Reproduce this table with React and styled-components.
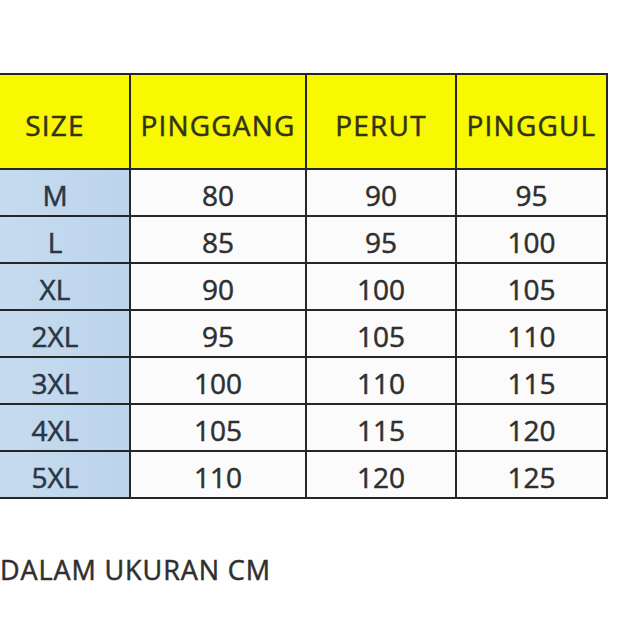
import React from "react";
import styled, { createGlobalStyle } from "styled-components";

const Global = createGlobalStyle`
  html, body { margin: 0; padding: 0; background: #fdfefd; }
  body { width: 639px; height: 639px; overflow: hidden; font-family: "Open Sans", "Noto Sans", sans-serif; }
`;

const Page = styled.div`
  width: 639px;
  height: 639px;
  padding-top: 73px;
  box-sizing: border-box;
  display: flex;
  flex-direction: column;
`;

const Table = styled.table`
  border-collapse: collapse;
  margin-left: -21px;
  table-layout: fixed;
  width: 627px;
`;

const HeadCell = styled.th`
  height: 95px;
  padding: 0;
  background: #f8f800;
  border: 2px solid #262626;
  color: #33331a;
  font-weight: 400;
  font-size: 28px;
  letter-spacing: 1.2px;
  -webkit-text-stroke: 0.5px currentColor;
  text-align: center;
  vertical-align: middle;
  padding-top: 6px;
  box-sizing: border-box;
`;

const Cell = styled.td`
  height: 47px;
  padding: 0;
  border: 2px solid #262626;
  background: ${(p) => (p.$size ? "linear-gradient(90deg, #c8dcef, #bcd4ec)" : "#fbfbfb")};
  color: ${(p) => (p.$size ? "#2a3644" : "#2f2f2f")};
  font-weight: 400;
  font-size: 28px;
  letter-spacing: 0px;
  -webkit-text-stroke: 0.5px currentColor;
  text-align: center;
  vertical-align: middle;
  box-sizing: border-box;
  line-height: 1;
  padding-top: 4px;
`;

const Note = styled.div`
  margin-top: 52px;
  font-size: 27px;
  font-weight: 400;
  letter-spacing: 0.9px;
  -webkit-text-stroke: 0.5px currentColor;
  color: #2f2f2f;
`;

const rows = [
  ["M", 80, 90, 95],
  ["L", 85, 95, 100],
  ["XL", 90, 100, 105],
  ["2XL", 95, 105, 110],
  ["3XL", 100, 110, 115],
  ["4XL", 105, 115, 120],
  ["5XL", 110, 120, 125],
];

export default function App() {
  return (
    <Page>
      <Global />
      <Table>
        <colgroup>
          <col style={{ width: 150 }} />
          <col style={{ width: 176 }} />
          <col style={{ width: 150 }} />
          <col style={{ width: 151 }} />
        </colgroup>
        <thead>
          <tr>
            <HeadCell>SIZE</HeadCell>
            <HeadCell>PINGGANG</HeadCell>
            <HeadCell>PERUT</HeadCell>
            <HeadCell>PINGGUL</HeadCell>
          </tr>
        </thead>
        <tbody>
          {rows.map((r) => (
            <tr key={r[0]}>
              <Cell $size>{r[0]}</Cell>
              <Cell>{r[1]}</Cell>
              <Cell>{r[2]}</Cell>
              <Cell>{r[3]}</Cell>
            </tr>
          ))}
        </tbody>
      </Table>
      <Note>DALAM UKURAN CM</Note>
    </Page>
  );
}
